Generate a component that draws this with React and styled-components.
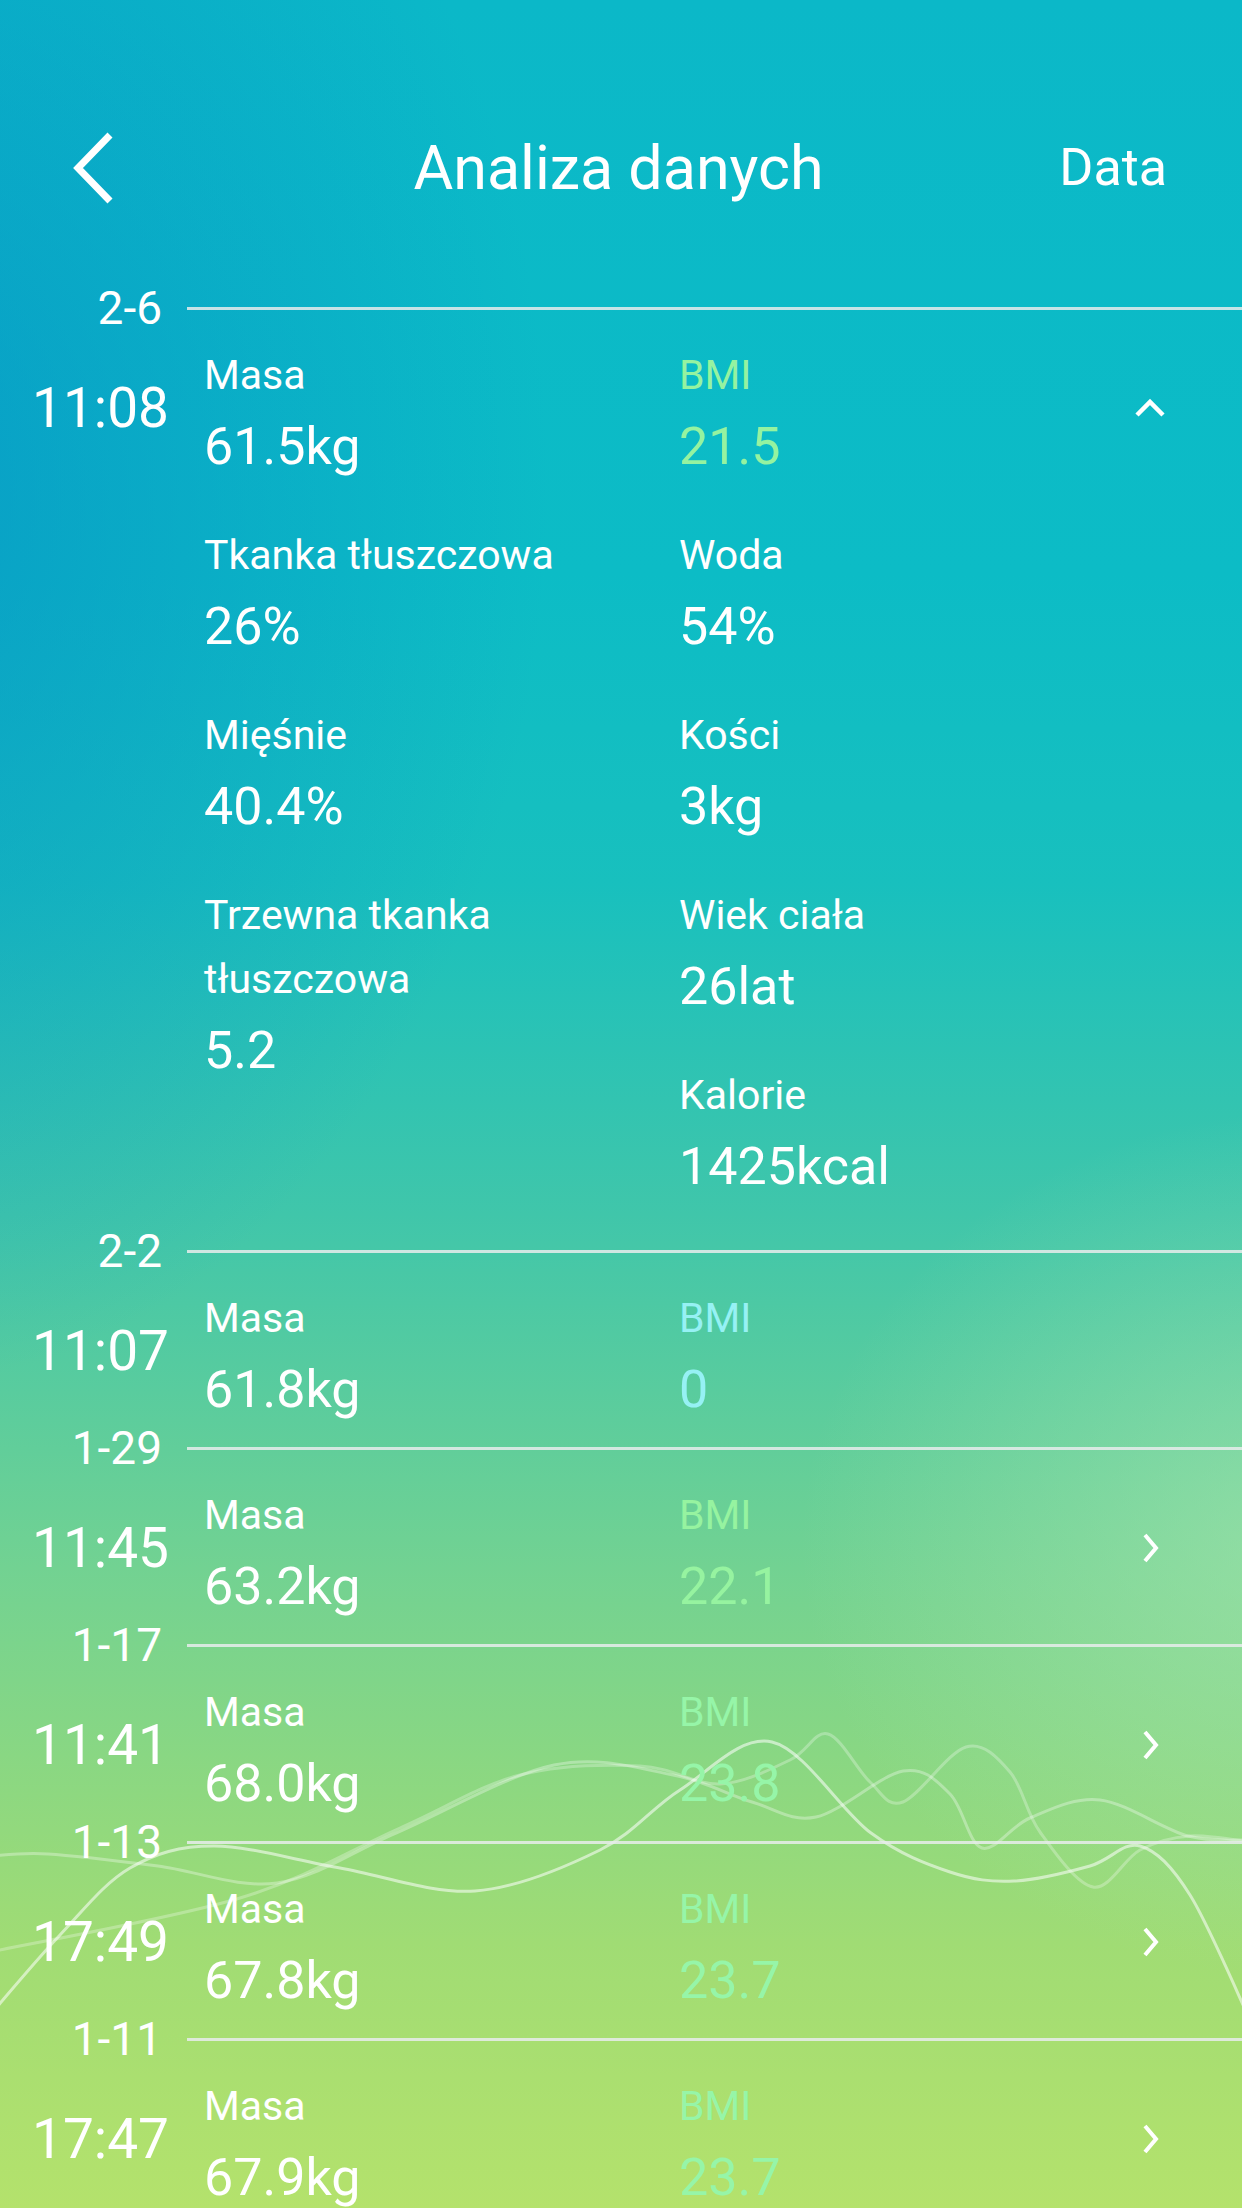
import React from 'react';
import styled, { createGlobalStyle } from 'styled-components';

const GlobalStyle = createGlobalStyle`
  html, body {
    margin: 0;
    padding: 0;
  }
  body {
    font-family: Roboto, "Noto Sans", "Liberation Sans", sans-serif;
    color: #fff;
  }
`;

const entries = [
  {
    date: '2-6',
    time: '11:08',
    open: true,
    bmiTone: '#95f3a0',
    left: [
      ['Masa', '61.5kg'],
      ['Tkanka tłuszczowa', '26%'],
      ['Mięśnie', '40.4%'],
      ['Trzewna tkanka tłuszczowa', '5.2'],
    ],
    right: [
      ['BMI', '21.5'],
      ['Woda', '54%'],
      ['Kości', '3kg'],
      ['Wiek ciała', '26lat'],
      ['Kalorie', '1425kcal'],
    ],
  },
  { date: '2-2', time: '11:07', mass: '61.8kg', bmi: '0', bmiTone: '#96f1f4', noArrow: true },
  { date: '1-29', time: '11:45', mass: '63.2kg', bmi: '22.1', bmiTone: '#96f3a0' },
  { date: '1-17', time: '11:41', mass: '68.0kg', bmi: '23.8', bmiTone: '#96f5a8' },
  { date: '1-13', time: '17:49', mass: '67.8kg', bmi: '23.7', bmiTone: '#96f5a8' },
  { date: '1-11', time: '17:47', mass: '67.9kg', bmi: '23.7', bmiTone: '#96f5a8' },
];

// smooth line through points (catmull-rom -> bezier)
const smooth = (pts) => {
  let d = `M${pts[0][0]},${pts[0][1]}`;
  for (let i = 0; i < pts.length - 1; i++) {
    const p0 = pts[i - 1] || pts[i];
    const p1 = pts[i];
    const p2 = pts[i + 1];
    const p3 = pts[i + 2] || p2;
    const c1 = [p1[0] + (p2[0] - p0[0]) / 6, p1[1] + (p2[1] - p0[1]) / 6];
    const c2 = [p2[0] - (p3[0] - p1[0]) / 6, p2[1] - (p3[1] - p1[1]) / 6];
    d += ` C${c1[0]},${c1[1]} ${c2[0]},${c2[1]} ${p2[0]},${p2[1]}`;
  }
  return d;
};

const waves = [
  {
    o: 0.55,
    pts: [[-10, 2015], [60, 1935], [130, 1868], [214, 1846], [340, 1868], [475, 1891], [600, 1850], [680, 1790], [772, 1742], [871, 1833], [950, 1872], [1014, 1881], [1090, 1866], [1140, 1846], [1190, 1895], [1250, 2020]],
  },
  {
    o: 0.32,
    pts: [[-10, 1856], [48, 1854], [158, 1866], [277, 1883], [396, 1833], [554, 1765], [673, 1775], [752, 1802], [816, 1817], [903, 1771], [950, 1794], [982, 1848], [1030, 1818], [1100, 1800], [1188, 1836], [1250, 1840]],
  },
  {
    o: 0.28,
    pts: [[-10, 1952], [240, 1898], [400, 1828], [520, 1775], [640, 1766], [720, 1784], [790, 1760], [828, 1734], [870, 1782], [903, 1802], [966, 1747], [1010, 1772], [1040, 1832], [1093, 1887], [1140, 1850], [1190, 1836], [1250, 1842]],
  },
];

const App = () => (
  <>
    <GlobalStyle />
    <Page>
      <Waves viewBox="0 0 1242 2208" width="1242" height="2208">
        {waves.map((w, i) => (
          <path key={i} d={smooth(w.pts)} fill="none" stroke="#fff" strokeOpacity={w.o} strokeWidth="3" />
        ))}
      </Waves>
      <Content>
        <Header>
          <BackButton>
            <svg width="46" height="74" viewBox="0 0 46 74">
              <polyline points="40,4 8,37 40,70" fill="none" stroke="#fff" strokeWidth="7" />
            </svg>
          </BackButton>
          <Title>Analiza danych</Title>
          <HeaderAction>Data</HeaderAction>
        </Header>

        <List>
          {entries.map((e) => (
            <Entry key={e.date}>
              <DateRow>
                <DateLabel>{e.date}</DateLabel>
                <Rule />
              </DateRow>
              <Body $open={e.open}>
                <Time>{e.time}</Time>
                <Column>
                  {(e.left || [['Masa', e.mass]]).map(([l, v]) => (
                    <Metric key={l}>
                      <Label>{l}</Label>
                      <Value>{v}</Value>
                    </Metric>
                  ))}
                </Column>
                <Column>
                  {(e.right || [['BMI', e.bmi]]).map(([l, v]) => (
                    <Metric key={l}>
                      <Label $tone={l === 'BMI' ? e.bmiTone : null}>{l}</Label>
                      <Value $tone={l === 'BMI' ? e.bmiTone : null}>{v}</Value>
                    </Metric>
                  ))}
                </Column>
                <Arrow>
                  {e.open ? (
                    <svg width="34" height="22" viewBox="0 0 34 22">
                      <polyline points="4,18 17,5 30,18" fill="none" stroke="#fff" strokeWidth="4.5" />
                    </svg>
                  ) : e.noArrow ? null : (
                    <svg width="22" height="32" viewBox="0 0 22 32">
                      <polyline points="6,3 17,16 6,29" fill="none" stroke="#fff" strokeWidth="4" />
                    </svg>
                  )}
                </Arrow>
              </Body>
            </Entry>
          ))}
        </List>
      </Content>
    </Page>
  </>
);

export default App;

const Page = styled.div`
  position: relative;
  width: 1242px;
  height: 2208px;
  overflow: hidden;
  background:
    radial-gradient(ellipse 720px 620px at 105% 70%, rgba(175, 232, 178, 0.55), rgba(175, 232, 178, 0) 70%),
    radial-gradient(ellipse 900px 1250px at -8% 22%, rgba(6, 140, 198, 0.6), rgba(6, 140, 198, 0) 72%),
    linear-gradient(180deg, #0bb8c8 0%, #0cbcc6 26%, #18c0be 40%, #40c6aa 55%, #72d292 71%, #a0dc74 88%, #b4e26c 100%);
`;

const Waves = styled.svg`
  position: absolute;
  left: 0;
  top: 0;
  z-index: 0;
`;

const Content = styled.div`
  position: relative;
  z-index: 1;
`;

const Header = styled.div`
  display: grid;
  grid-template-columns: 1fr auto 1fr;
  align-items: center;
  height: 120px;
  margin-top: 108px;
  padding: 0 75px 0 70px;
`;

const BackButton = styled.div`
  display: flex;
  align-items: center;
  justify-self: start;
`;

const Title = styled.div`
  font-size: 61px;
  line-height: 1;
  font-weight: 400;
`;

const HeaderAction = styled.div`
  justify-self: end;
  font-size: 52px;
  line-height: 1;
`;

const List = styled.div`
  margin-top: 62px;
  display: flex;
  flex-direction: column;
`;

const Entry = styled.div`
  display: flex;
  flex-direction: column;
`;

const DateRow = styled.div`
  display: flex;
  align-items: center;
  height: 36px;
  gap: 25px;
`;

const DateLabel = styled.div`
  width: 162px;
  text-align: right;
  font-size: 46px;
  line-height: 36px;
`;

const Rule = styled.div`
  flex: 1;
  height: 3px;
  background: rgba(232, 236, 236, 0.85);
`;

const Body = styled.div`
  display: grid;
  grid-template-columns: 204px 475px 1fr 60px;
  padding: 17px 62px ${(p) => (p.$open ? '26px' : '0')} 0;
`;

const Time = styled.div`
  padding: 33px 35px 0 0;
  text-align: right;
  font-size: 55px;
  line-height: 64px;
  height: 64px;
`;

const Column = styled.div`
  display: flex;
  flex-direction: column;
  gap: 36px;
`;

const Metric = styled.div`
  display: flex;
  flex-direction: column;
`;

const Label = styled.div`
  font-size: 41px;
  line-height: 64px;
  color: ${(p) => p.$tone || '#fff'};
`;

const Value = styled.div`
  font-size: 52px;
  line-height: 80px;
  color: ${(p) => p.$tone || '#fff'};
`;

const Arrow = styled.div`
  display: flex;
  justify-content: center;
  align-items: center;
  height: 64px;
  margin-top: 33px;
`;
